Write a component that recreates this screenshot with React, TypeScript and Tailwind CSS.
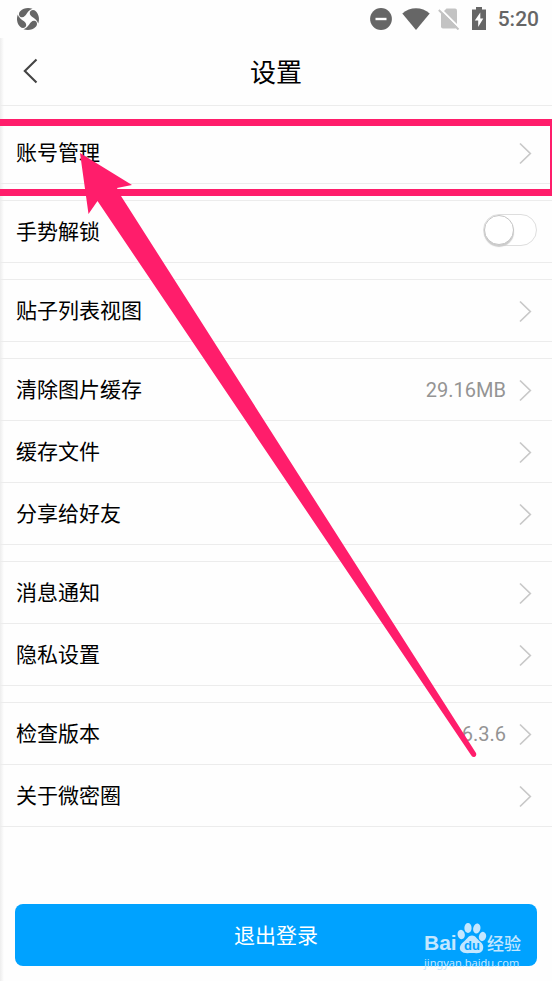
import { useState } from 'react';

interface SettingItem {
  label: string;
  value?: string;
  toggle?: boolean;
}

const groups: SettingItem[][] = [
  [{ label: '账号管理' }],
  [{ label: '手势解锁', toggle: true }],
  [{ label: '贴子列表视图' }],
  [{ label: '清除图片缓存', value: '29.16MB' }, { label: '缓存文件' }, { label: '分享给好友' }],
  [{ label: '消息通知' }, { label: '隐私设置' }],
  [{ label: '检查版本', value: '6.3.6' }, { label: '关于微密圈' }],
];

const Chevron: React.FC = () => (
  <svg width="13" height="24" viewBox="0 0 13 24" fill="none" stroke="#c8c8c8" strokeWidth="1.7" aria-hidden="true">
    <path d="M1 2.5L11.3 12.5L1 22.5" />
  </svg>
);

const StatusBar: React.FC = () => (
  <div className="flex h-[37px] items-center justify-between pl-4 pr-[13px] text-[#666]">
    {/* App notification */}
    <svg width="24" height="24" viewBox="0 0 24 24" fill="currentColor" aria-hidden="true">
      {[0, 90, 180, 270].map((angle) => (
        <path
          key={angle}
          transform={`rotate(${angle} 12 12)`}
          d="M4.2 4.2C7.4 1 12.2 .2 16.5 1.8C14.2 2.6 12.4 4.2 10.8 6.5C9.4 8.6 7.9 10.6 5.5 10.2C2.800 9.700 2.100 6.300 4.200 4.200Z"
        />
      ))}
    </svg>
    <div className="flex items-center">
      <svg width="22" height="22" viewBox="0 0 22 22" aria-hidden="true">
        <circle cx="11" cy="11" r="10.9" fill="currentColor" />
        <path d="M5.5 11H16.5" stroke="#fff" strokeWidth="2.4" />
      </svg>
      <svg className="ml-[10px]" width="28" height="22" viewBox="0 0 28 22" fill="currentColor" aria-hidden="true">
        <path d="M.3 5.5C8-1.5 20-1.5 27.7 5.5L14 22Z" />
      </svg>
      <svg className="ml-2" width="22" height="22" viewBox="0 0 22 22" aria-hidden="true">
        <path d="M8.5 .5H17Q19 .5 19 2.5V18.5Q19 20.5 17 20.5H5Q3 20.5 3 18.5V6Z" fill="#c3c3c3" />
        <path d="M2.3 .7L22 20.4" stroke="#fff" strokeWidth="2" />
        <path d="M.8 2L20.5 21.5" stroke="#c3c3c3" strokeWidth="2" />
      </svg>
      <svg className="ml-3" width="14" height="23" viewBox="0 0 14 23" aria-hidden="true">
        <path d="M0 2.5H4V0H10V2.5H14V23H0Z" fill="currentColor" />
        <path d="M8.3 5.5L2.8 13.5H6.2V20L11.3 11.5H8.3Z" fill="#fff" />
      </svg>
      <span className="ml-3 font-[Roboto,sans-serif] text-[21px] leading-6 font-medium">5:20</span>
    </div>
  </div>
);

const Row: React.FC<{ item: SettingItem }> = ({ item }) => {
  const [on, setOn] = useState(false);
  const rowClass =
    'flex h-[62px] w-full items-center justify-between border-b border-[#ececec] pr-[15px] pb-px pl-4 text-left';

  if (item.toggle) {
    return (
      <label className={rowClass}>
        <span>{item.label}</span>
        <input
          type="checkbox"
          role="switch"
          checked={on}
          onChange={(e) => setOn(e.target.checked)}
          className="mb-0.5 h-8 w-[54px] appearance-none rounded-full border border-[#dedede] bg-white before:block before:h-[30px] before:w-[30px] before:rounded-full before:border before:border-[#c4c4c4] before:bg-white before:shadow-[0_2px_1px_#ccc] checked:bg-[#00a2ff] checked:before:translate-x-[22px]"
        />
      </label>
    );
  }

  return (
    <button type="button" className={rowClass}>
      <span>{item.label}</span>
      <span className="flex items-center gap-[13px] pt-px">
        {item.value && <span className="font-[Roboto,sans-serif] text-[20px] text-[#949494]">{item.value}</span>}
        <span className="mr-[5px]">
          <Chevron />
        </span>
      </span>
    </button>
  );
};

const Watermark: React.FC = () => (
  <div className="pointer-events-none absolute right-[29px] bottom-[11px] w-[99px] text-[#c4e7ff]">
    <div className="flex h-8 items-end">
      <span className="w-[33px] font-['Liberation_Sans',sans-serif] text-[21px] leading-6 font-bold">Bai</span>
      <svg width="30" height="32" viewBox="0 0 30 32" fill="currentColor" aria-hidden="true">
        <ellipse cx="4.2" cy="11.5" rx="3.6" ry="4.7" transform="rotate(-12 4.2 11.5)" />
        <ellipse cx="11" cy="5" rx="3.6" ry="5" />
        <ellipse cx="19.8" cy="5.5" rx="3.6" ry="5" transform="rotate(12 19.8 5.5)" />
        <ellipse cx="25.5" cy="13.5" rx="3.6" ry="4.7" transform="rotate(14 25.5 13.5)" />
        <path d="M15 12.5C18.5 12.5 19.5 15.5 22.5 18C26.5 21 27 24.5 25.5 27.5C23.5 31 19 30 15 30C11 30 6 31 3.5 27.5C1.8 24.5 3.5 21 7.5 18C10.5 15.5 11.5 12.5 15 12.5Z" />
        <text x="7" y="27" fill="#00a2ff" fontFamily="Liberation Sans, sans-serif" fontSize="13" fontWeight="700">
          du
        </text>
      </svg>
      <span className="text-[17px] leading-6 font-medium">经验</span>
    </div>
    <div className="font-['Noto_Sans',sans-serif] text-[11px] leading-4">jingyan.baidu.com</div>
  </div>
);

const App: React.FC = () => (
  <div className="relative min-h-screen overflow-hidden bg-[#fefefe] font-['Noto_Sans_CJK_SC',sans-serif] text-[21px] text-black">
    {/* Soft shadow along the left edge */}
    <div className="pointer-events-none absolute top-[38px] bottom-0 left-0 w-1 bg-linear-to-r from-[#ededed] to-transparent" />

    <StatusBar />

    <header className="grid h-[69px] grid-cols-[1fr_auto_1fr] items-center border-b border-[#ececec] px-[15px]">
      <button type="button" aria-label="返回" className="justify-self-start px-2">
        <svg width="15" height="26" viewBox="0 0 15 26" fill="none" stroke="#444" strokeWidth="2.1" aria-hidden="true">
          <path d="M13.5 1.5L1.8 13L13.5 24.5" />
        </svg>
      </button>
      <h1 className="text-[26px] leading-9">设置</h1>
    </header>

    <main className="flex flex-col gap-4 pt-[15px]">
      {groups.map((items, i) => (
        <section key={i} className="relative border-t border-[#ececec]">
          {items.map((item) => (
            <Row key={item.label} item={item} />
          ))}
          {/* Highlight around the first entry */}
          {i === 0 && (
            <div className="pointer-events-none absolute -top-[3px] right-[-5px] -bottom-3 -left-2 border-7 border-[#ff1d6b]" />
          )}
        </section>
      ))}
    </main>

    <footer className="relative px-[15px] pt-[77px] pb-4">
      <button type="button" className="h-[62px] w-full rounded-lg bg-[#00a2ff] text-white">
        退出登录
      </button>
      <Watermark />
    </footer>

    {/* Pointer arrow */}
    <svg
      className="pointer-events-none absolute top-0 left-0"
      width="552"
      height="981"
      viewBox="0 0 552 981"
      fill="#ff1d6b"
      aria-hidden="true"
    >
      <path d="M80 153L132 185L117 188L121 196L476 753Q477 756 474.5 757Q472 757.5 471 755L97.5 201L88.5 214Z" />
    </svg>
  </div>
);

export default App;
